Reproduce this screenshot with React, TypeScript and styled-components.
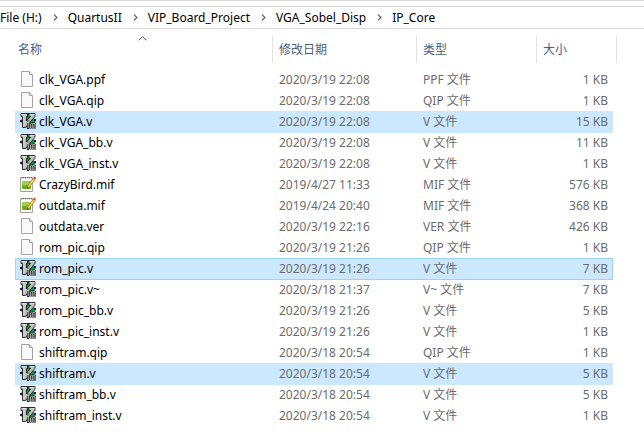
import React from "react";
import styled, { createGlobalStyle } from "styled-components";

const GlobalStyle = createGlobalStyle`
  * { box-sizing: border-box; }
  body {
    margin: 0;
    background: #fff;
    color: #000;
    font: 12px/20px "Noto Sans", "Noto Sans CJK SC", sans-serif;
  }
`;

const columns = "minmax(258px, 1fr) 144px 120px 80px";

const Page = styled.main`
  border-top: 1px solid #d9d9d9;
  padding-top: 5px;
  overflow: hidden;
`;

const AddressBar = styled.nav`
  border: solid #d9d9d9;
  border-width: 1px 0;
`;

const Crumbs = styled.ol`
  display: flex;
  align-items: center;
  height: 21px;
  margin: 0;
  padding: 0;
  list-style: none;
  white-space: nowrap;
`;

const Crumb = styled.li`
  display: flex;
  align-items: center;
`;

const CrumbLink = styled.a`
  color: inherit;
  text-decoration: none;
`;

const Separator = styled.svg`
  width: 5px;
  height: 7px;
  margin: 0 10px 0 11px;
`;

const FileTable = styled.table`
  display: block;
  padding: 7px 27px 0 15px;
`;

const Head = styled.thead`
  display: block;
`;

const HeadRow = styled.tr`
  display: grid;
  grid-template-columns: ${columns};
  height: 27px;
`;

const HeadCell = styled.th<{ $first?: boolean }>`
  position: relative;
  padding: 0;
  border-right: 1px solid #e2e2e2;
  text-align: left;
  font-weight: 400;
  padding-left: ${(p) => (p.$first ? 3 : 6)}px;
`;

const SortButton = styled.button`
  display: block;
  width: 100%;
  height: 27px;
  padding: 0;
  border: 0;
  background: none;
  color: #4c607a;
  font: inherit;
  text-align: left;
`;

const SortArrow = styled.svg`
  position: absolute;
  top: 0;
  left: calc(50% - 6px);
  width: 9px;
  height: 5px;
`;

const Body = styled.tbody`
  display: block;
  padding: 6px 4px 0 0;
`;

type Mark = "none" | "selected" | "focused";

const Row = styled.tr<{ $mark: Mark }>`
  display: grid;
  grid-template-columns: minmax(257px, 1fr) 144px 120px 77px;
  height: 22px;
  margin-bottom: -1px;
  background: ${(p) => (p.$mark === "none" ? "transparent" : "#cce8ff")};
  box-shadow: ${(p) => (p.$mark === "focused" ? "inset 0 0 0 1px #99d1ff" : "none")};
`;

const Cell = styled.td<{ $right?: boolean }>`
  padding: 0 5px 0 7px;
  color: #6d6d6d;
  line-height: 21px;
  white-space: nowrap;
  text-align: ${(p) => (p.$right ? "right" : "left")};
`;

const NameCell = styled(Cell)`
  display: flex;
  gap: 3px;
  padding: 0 5px;
  color: #000;
`;

const Icon = styled.svg`
  flex: none;
  width: 16px;
  height: 16px;
  margin-top: 2px;
`;

function PageIcon() {
  return (
    <Icon viewBox="0 0 16 16" aria-hidden="true">
      <path d="M1.5.5h8l3 3v12h-11z" fill="#f9f9f9" stroke="#a3a3a3" />
      <path d="M9.5.5v3h3" fill="#ececec" stroke="#a3a3a3" />
    </Icon>
  );
}

function VimIcon() {
  return (
    <Icon viewBox="0 0 16 16" aria-hidden="true">
      <path d="M8 0l8 8-8 8-8-8z" fill="#0a9a2a" />
      <path d="M0 7h2v2H0zM7 0h2v1H7zM14 6h2v2h-2zM7 15h2v1H7z" fill="#15158c" />
      <path
        d="M1 .5h6.5v3h-1v4.5L10.5 3.5H9v-3h6v2.8L5.5 14.5h-3v-11H1z"
        fill="#bdbdbd"
        stroke="#1c1c1c"
        strokeWidth="0.9"
      />
      <path d="M4 2v11M1.6 1.5h5M9.6 1.5h5" stroke="#dcdcdc" fill="none" />
      <path
        d="M8.3 7.6v1.2M8.3 10v5.4M10.6 15.4v-4.6M12.8 15.4v-4.4M10.6 11l1-.8 1.2.8 1-.8 1.2.8v4.4"
        fill="none"
        stroke="#1a1a1a"
        strokeWidth="2"
      />
      <path
        d="M8.3 7.6v1.2M8.3 10v5M10.6 15v-4.2M12.8 15v-4M10.6 11l1-.8 1.2.8 1-.8 1.2.8v4"
        fill="none"
        stroke="#e2e2e2"
        strokeWidth="0.8"
      />
    </Icon>
  );
}

function NotepadIcon() {
  return (
    <Icon viewBox="0 0 16 16" aria-hidden="true">
      <path d="M.5 1.5h12v14H.5z" fill="#fdfdfa" stroke="#a3a39a" />
      <path d="M1 1.5h11" stroke="#6f6f6f" strokeDasharray="1 1" />
      <path d="M1 2.5h11" stroke="#d4d4d4" strokeDasharray="1 1" />
      <rect x="2" y="5" width="9" height="8" rx="1" fill="#9bcf4c" />
      <path d="M2 9c3 1 6-1 9-1v4l-1 1H3l-1-1z" fill="#6cac24" />
      <path d="M7 12.5l.7-2.7 5.6-7.6 1.9 1.3-5.7 7.7z" fill="#f6c52f" stroke="#8b6a1e" strokeWidth="0.6" />
      <path d="M8.5 10.4l5.6-7.5" stroke="#fff0a0" strokeWidth="0.6" />
      <path d="M13.1 2.2L14.3.6l1.7 1.2-.8 1.7z" fill="#d9402c" />
      <path d="M7 12.5l.5-1.6 1 .7z" fill="#222" />
    </Icon>
  );
}

const icons = { page: PageIcon, vim: VimIcon, note: NotepadIcon };

type Entry = [keyof typeof icons, string, string, string, string, Mark?];

const entries: Entry[] = [
  ["page", "clk_VGA.ppf", "2020/3/19 22:08", "PPF 文件", "1 KB"],
  ["page", "clk_VGA.qip", "2020/3/19 22:08", "QIP 文件", "1 KB"],
  ["vim", "clk_VGA.v", "2020/3/19 22:08", "V 文件", "15 KB", "selected"],
  ["vim", "clk_VGA_bb.v", "2020/3/19 22:08", "V 文件", "11 KB"],
  ["vim", "clk_VGA_inst.v", "2020/3/19 22:08", "V 文件", "1 KB"],
  ["note", "CrazyBird.mif", "2019/4/27 11:33", "MIF 文件", "576 KB"],
  ["note", "outdata.mif", "2019/4/24 20:40", "MIF 文件", "368 KB"],
  ["page", "outdata.ver", "2020/3/19 22:16", "VER 文件", "426 KB"],
  ["page", "rom_pic.qip", "2020/3/19 21:26", "QIP 文件", "1 KB"],
  ["vim", "rom_pic.v", "2020/3/19 21:26", "V 文件", "7 KB", "focused"],
  ["vim", "rom_pic.v~", "2020/3/18 21:37", "V~ 文件", "7 KB"],
  ["vim", "rom_pic_bb.v", "2020/3/19 21:26", "V 文件", "5 KB"],
  ["vim", "rom_pic_inst.v", "2020/3/19 21:26", "V 文件", "1 KB"],
  ["page", "shiftram.qip", "2020/3/18 20:54", "QIP 文件", "1 KB"],
  ["vim", "shiftram.v", "2020/3/18 20:54", "V 文件", "5 KB", "selected"],
  ["vim", "shiftram_bb.v", "2020/3/18 20:54", "V 文件", "5 KB"],
  ["vim", "shiftram_inst.v", "2020/3/18 20:54", "V 文件", "1 KB"],
];

const path = ["File (H:)", "QuartusII", "VIP_Board_Project", "VGA_Sobel_Disp", "IP_Core"];

export default function App() {
  return (
    <>
      <GlobalStyle />
      <Page>
        <AddressBar>
          <Crumbs>
            {path.map((name, i) => (
              <Crumb key={name}>
                {i > 0 && (
                  <Separator viewBox="0 0 5 7" aria-hidden="true">
                    <path d="M1 .7L4 3.5 1 6.3" fill="none" stroke="#666" strokeWidth="1.2" />
                  </Separator>
                )}
                <CrumbLink href="#">{name}</CrumbLink>
              </Crumb>
            ))}
          </Crumbs>
        </AddressBar>
        <FileTable>
          <Head>
            <HeadRow>
              {["名称", "修改日期", "类型", "大小"].map((label, i) => (
                <HeadCell key={label} $first={i === 0} scope="col">
                  <SortButton type="button">{label}</SortButton>
                  {i === 0 && (
                    <SortArrow viewBox="0 0 9 5" aria-hidden="true">
                      <path d="M.7 4.3l3.8-3.6 3.8 3.6" fill="none" stroke="#555" />
                    </SortArrow>
                  )}
                </HeadCell>
              ))}
            </HeadRow>
          </Head>
          <Body>
            {entries.map(([kind, name, date, type, size, mark = "none"]) => {
              const Glyph = icons[kind];
              return (
                <Row key={name} $mark={mark} aria-selected={mark !== "none"}>
                  <NameCell>
                    <Glyph />
                    {name}
                  </NameCell>
                  <Cell>{date}</Cell>
                  <Cell>{type}</Cell>
                  <Cell $right>{size}</Cell>
                </Row>
              );
            })}
          </Body>
        </FileTable>
      </Page>
    </>
  );
}
